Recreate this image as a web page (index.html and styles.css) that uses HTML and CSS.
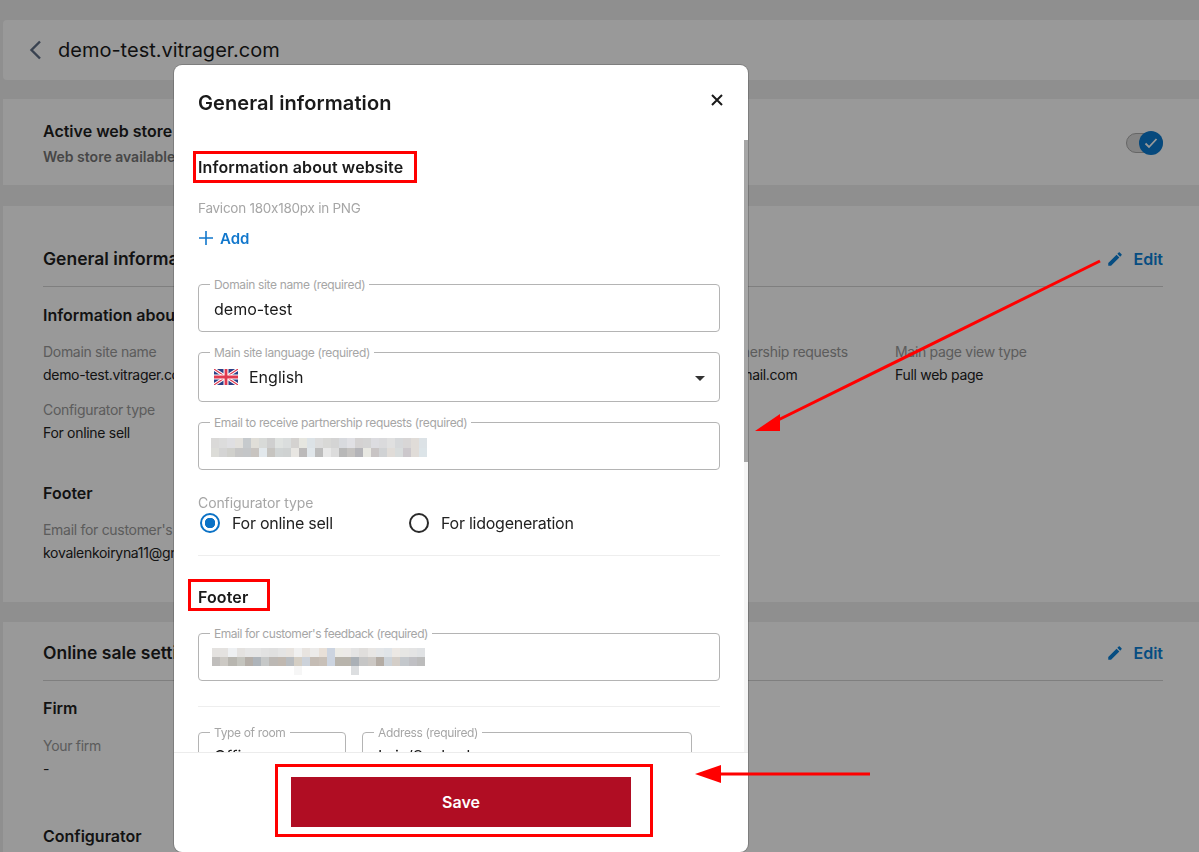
FILE: index.html
```html
<!DOCTYPE html>
<html lang="en">
<head>
<meta charset="utf-8">
<title>demo-test.vitrager.com</title>
<link rel="stylesheet" href="styles.css">
</head>
<body>
<main class="page">
  <header class="card top-card">
    <svg class="back" width="14" height="20" viewBox="0 0 14 20"><path d="M12 1.5 3.5 10l8.5 8.5" fill="none" stroke="#5f6e85" stroke-width="2.4"/></svg>
    <h1 class="site">demo-test.vitrager.com</h1>
  </header>
  <section class="card active-card">
    <div>
      <h2 class="h-sm">Active web store</h2>
      <p class="sub">Web store available to customers</p>
    </div>
    <div class="toggle">
      <span class="knob"><svg width="14" height="12" viewBox="0 0 14 12"><path d="M1.5 6.5 5 10l7.5-8" fill="none" stroke="#fff" stroke-width="1.8"/></svg></span>
    </div>
  </section>
  <section class="card info-card">
    <div class="card-head">
      <h2 class="h-md">General information</h2>
      <a class="edit"><svg width="18" height="18" viewBox="0 0 24 24"><path fill="#0a80d8" d="M3 17.25V21h3.75L17.81 9.94l-3.75-3.75L3 17.25zM20.71 7.04c.39-.39.39-1.02 0-1.41l-2.34-2.34c-.39-.39-1.02-.39-1.41 0l-1.83 1.83 3.75 3.75 1.83-1.83z"/></svg>Edit</a>
    </div>
    <h3 class="h-sm sec">Information about website</h3>
    <div class="grid">
      <div><p class="lbl">Domain site name</p><p class="val">demo-test.vitrager.com</p></div>
      <div><p class="lbl">Main site language</p><p class="val">English</p></div>
      <div><p class="lbl">Email to receive partnership requests</p><p class="val">kovalenkoiryna11@gmail.com</p></div>
      <div><p class="lbl">Main page view type</p><p class="val">Full web page</p></div>
      <div><p class="lbl">Configurator type</p><p class="val">For online sell</p></div>
    </div>
    <h3 class="h-sm sec-far">Footer</h3>
    <div class="grid">
      <div><p class="lbl">Email for customer's feedback</p><p class="val">kovalenkoiryna11@gmail.com</p></div>
    </div>
  </section>
  <section class="card sale-card">
    <div class="card-head">
      <h2 class="h-md">Online sale settings</h2>
      <a class="edit"><svg width="18" height="18" viewBox="0 0 24 24"><path fill="#0a80d8" d="M3 17.25V21h3.75L17.81 9.94l-3.75-3.75L3 17.25zM20.71 7.04c.39-.39.39-1.02 0-1.41l-2.34-2.34c-.39-.39-1.02-.39-1.41 0l-1.83 1.83 3.75 3.75 1.83-1.83z"/></svg>Edit</a>
    </div>
    <h3 class="h-sm sec">Firm</h3>
    <div class="grid">
      <div><p class="lbl">Your firm</p><p class="val">-</p></div>
    </div>
    <h3 class="h-sm sec-conf">Configurator</h3>
  </section>
</main>

<div class="overlay">
  <div class="modal">
    <div class="modal-head">
      <h2 class="modal-title">General information</h2>
      <button class="close" aria-label="Close"><svg width="12" height="12" viewBox="0 0 12 12"><path d="M1 1l10 10M11 1 1 11" stroke="#1a1a1a" stroke-width="2" fill="none"/></svg></button>
    </div>
    <div class="modal-body">
      <h3 class="m-h m-h-first">Information about website</h3>
      <p class="favicon">Favicon 180x180px in PNG</p>
      <a class="add"><svg width="16" height="16" viewBox="0 0 16 16"><path d="M8 1v14M1 8h14" stroke="#1177cc" stroke-width="1.6" fill="none"/></svg>Add</a>

      <div class="field f-first"><span class="legend">Domain site name (required)</span><span class="value">demo-test</span></div>
      <div class="field f-select"><span class="legend">Main site language (required)</span>
        <svg class="flag" width="24" height="16" viewBox="0 0 24 16">
          <rect width="24" height="16" fill="#2b3f86"/>
          <path d="M0 0l24 16M24 0 0 16" stroke="#fff" stroke-width="3.2"/>
          <path d="M0 0l24 16M24 0 0 16" stroke="#e0394f" stroke-width="1.1"/>
          <path d="M12 0v16M0 8h24" stroke="#fff" stroke-width="5"/>
          <path d="M12 0v16M0 8h24" stroke="#e0394f" stroke-width="2.8"/>
        </svg>
        <span class="value">English</span>
        <span class="caret"></span>
      </div>
      <div class="field"><span class="legend">Email to receive partnership requests (required)</span>
        <svg class="mosaic mosaic-a" width="216" height="19" viewBox="0 0 27 2" preserveAspectRatio="none" shape-rendering="crispEdges" aria-hidden="true">
          <rect x="0" y="0" width="1" height="1" fill="#dad9d8"/><rect x="1" y="0" width="1" height="1" fill="#dcdcdc"/><rect x="2" y="0" width="1" height="1" fill="#dfdfe2"/><rect x="3" y="0" width="1" height="1" fill="#e2e0dc"/><rect x="4" y="0" width="1" height="1" fill="#c6cacd"/><rect x="5" y="0" width="1" height="1" fill="#e0ded8"/><rect x="6" y="0" width="1" height="1" fill="#d8dad8"/><rect x="7" y="0" width="1" height="1" fill="#cfcfcf"/><rect x="8" y="0" width="1" height="1" fill="#dfe2e0"/><rect x="9" y="0" width="1" height="1" fill="#dadddd"/><rect x="10" y="0" width="1" height="1" fill="#d4d2d0"/><rect x="11" y="0" width="1" height="1" fill="#e6e6e0"/><rect x="12" y="0" width="1" height="1" fill="#dce2e6"/><rect x="13" y="0" width="1" height="1" fill="#dcdcdc"/><rect x="14" y="0" width="1" height="1" fill="#d8d8d6"/><rect x="15" y="0" width="1" height="1" fill="#d4d4d4"/><rect x="16" y="0" width="1" height="1" fill="#d8dade"/><rect x="17" y="0" width="1" height="1" fill="#e0e0e4"/><rect x="18" y="0" width="1" height="1" fill="#d4d2d2"/><rect x="19" y="0" width="1" height="1" fill="#d4d4d4"/><rect x="20" y="0" width="1" height="1" fill="#dcdce0"/><rect x="21" y="0" width="1" height="1" fill="#dadadc"/><rect x="22" y="0" width="1" height="1" fill="#e0e0e0"/><rect x="23" y="0" width="1" height="1" fill="#d6d8da"/><rect x="24" y="0" width="1" height="1" fill="#d8d6d6"/><rect x="25" y="0" width="1" height="1" fill="#e0dcd8"/><rect x="26" y="0" width="1" height="1" fill="#dce2e6"/>
          <rect x="0" y="1" width="1" height="1" fill="#dcdcd8"/><rect x="1" y="1" width="1" height="1" fill="#d4d4d4"/><rect x="2" y="1" width="1" height="1" fill="#d0d0cc"/><rect x="3" y="1" width="1" height="1" fill="#c6c6c6"/><rect x="4" y="1" width="1" height="1" fill="#c4c6c8"/><rect x="5" y="1" width="1" height="1" fill="#c8c4c0"/><rect x="6" y="1" width="1" height="1" fill="#e2e8ec"/><rect x="7" y="1" width="1" height="1" fill="#c6c4c0"/><rect x="8" y="1" width="1" height="1" fill="#d0d4d4"/><rect x="9" y="1" width="1" height="1" fill="#cfd2d2"/><rect x="10" y="1" width="1" height="1" fill="#e8e6e2"/><rect x="11" y="1" width="1" height="1" fill="#bcbaba"/><rect x="12" y="1" width="1" height="1" fill="#e0e6ea"/><rect x="13" y="1" width="1" height="1" fill="#bcbcbc"/><rect x="14" y="1" width="1" height="1" fill="#e8e8e8"/><rect x="15" y="1" width="1" height="1" fill="#dcdcdc"/><rect x="16" y="1" width="1" height="1" fill="#b8b8b8"/><rect x="17" y="1" width="1" height="1" fill="#c4c2c0"/><rect x="18" y="1" width="1" height="1" fill="#b4b4b8"/><rect x="19" y="1" width="1" height="1" fill="#e8e8e2"/><rect x="20" y="1" width="1" height="1" fill="#c8c4c4"/><rect x="21" y="1" width="1" height="1" fill="#d0d2d4"/><rect x="22" y="1" width="1" height="1" fill="#e0dcd8"/><rect x="23" y="1" width="1" height="1" fill="#d8dcdc"/><rect x="24" y="1" width="1" height="1" fill="#ccc8cc"/><rect x="25" y="1" width="1" height="1" fill="#e0dcd8"/><rect x="26" y="1" width="1" height="1" fill="#dce4e8"/>
        </svg>
      </div>

      <p class="conf-label">Configurator type</p>
      <div class="radios">
        <label class="radio radio-a"><span class="dot dot-on"></span>For online sell</label>
        <label class="radio"><span class="dot"></span>For lidogeneration</label>
      </div>
      <hr class="rule rule-a">

      <h3 class="m-h m-h-footer">Footer</h3>
      <div class="field f-footer"><span class="legend">Email for customer's feedback (required)</span>
        <svg class="mosaic mosaic-b" width="213" height="27" viewBox="0 0 26 3" preserveAspectRatio="none" shape-rendering="crispEdges" aria-hidden="true">
          <rect x="0" y="0" width="1" height="1" fill="#e4e2e0"/><rect x="1" y="0" width="1" height="1" fill="#e4e2e0"/><rect x="2" y="0" width="1" height="1" fill="#eef0f2"/><rect x="3" y="0" width="1" height="1" fill="#e4e2e0"/><rect x="4" y="0" width="1" height="1" fill="#e6e6e6"/><rect x="5" y="0" width="1" height="1" fill="#e6e6e6"/><rect x="6" y="0" width="1" height="1" fill="#e2e2e2"/><rect x="7" y="0" width="1" height="1" fill="#e0e0e0"/><rect x="8" y="0" width="1" height="1" fill="#e4e4e4"/><rect x="9" y="0" width="1" height="1" fill="#e8e4e0"/><rect x="10" y="0" width="1" height="1" fill="#f0f0f0"/><rect x="11" y="0" width="1" height="1" fill="#e8e4e0"/><rect x="12" y="0" width="1" height="1" fill="#ecebea"/><rect x="13" y="0" width="1" height="1" fill="#e8e0d8"/><rect x="14" y="0" width="1" height="1" fill="#ccd4e0"/><rect x="15" y="0" width="1" height="1" fill="#ecebe6"/><rect x="16" y="0" width="1" height="1" fill="#eceae8"/><rect x="17" y="0" width="1" height="1" fill="#e4e4e4"/><rect x="18" y="0" width="1" height="1" fill="#e0dedc"/><rect x="19" y="0" width="1" height="1" fill="#e8e6e4"/><rect x="20" y="0" width="1" height="1" fill="#e4e6e8"/><rect x="21" y="0" width="1" height="1" fill="#e0e4e8"/><rect x="22" y="0" width="1" height="1" fill="#ece8e4"/><rect x="23" y="0" width="1" height="1" fill="#e6e6e4"/><rect x="24" y="0" width="1" height="1" fill="#e4e4e4"/><rect x="25" y="0" width="1" height="1" fill="#e0e2e4"/>
          <rect x="0" y="1" width="1" height="1" fill="#c0bebc"/><rect x="1" y="1" width="1" height="1" fill="#ccc9c4"/><rect x="2" y="1" width="1" height="1" fill="#b8b6b0"/><rect x="3" y="1" width="1" height="1" fill="#c4c4be"/><rect x="4" y="1" width="1" height="1" fill="#b4aea8"/><rect x="5" y="1" width="1" height="1" fill="#aeb4ba"/><rect x="6" y="1" width="1" height="1" fill="#c6c8c8"/><rect x="7" y="1" width="1" height="1" fill="#bcb8b4"/><rect x="8" y="1" width="1" height="1" fill="#c0b8b0"/><rect x="9" y="1" width="1" height="1" fill="#b8bcc0"/><rect x="10" y="1" width="1" height="1" fill="#d4cec4"/><rect x="11" y="1" width="1" height="1" fill="#ccd2da"/><rect x="12" y="1" width="1" height="1" fill="#c4bcb4"/><rect x="13" y="1" width="1" height="1" fill="#c8c0b8"/><rect x="14" y="1" width="1" height="1" fill="#ccd4e0"/><rect x="15" y="1" width="1" height="1" fill="#b8b4ac"/><rect x="16" y="1" width="1" height="1" fill="#b8b4ac"/><rect x="17" y="1" width="1" height="1" fill="#aab0b6"/><rect x="18" y="1" width="1" height="1" fill="#c6c6c6"/><rect x="19" y="1" width="1" height="1" fill="#ccc8c4"/><rect x="20" y="1" width="1" height="1" fill="#b4aca4"/><rect x="21" y="1" width="1" height="1" fill="#ccd2d8"/><rect x="22" y="1" width="1" height="1" fill="#d4cec8"/><rect x="23" y="1" width="1" height="1" fill="#c4c8cc"/><rect x="24" y="1" width="1" height="1" fill="#c0c0c4"/><rect x="25" y="1" width="1" height="1" fill="#bcbcbc"/>
          <rect x="10" y="2" width="1" height="1" fill="#f6f6f6"/><rect x="17" y="2" width="1" height="1" fill="#dcdee0"/>
        </svg>
      </div>
      <hr class="rule rule-b">
      <div class="field-row">
        <div class="field f-room"><span class="legend">Type of room</span><span class="value">Office</span></div>
        <div class="field f-addr"><span class="legend">Address (required)</span><span class="value">Lviv/Svoboda ave</span></div>
      </div>
    </div>
    <div class="modal-foot"><button class="save">Save</button></div>
    <span class="track"><span class="thumb"></span></span>
  </div>
</div>

<span class="mark mark-info"></span>
<span class="mark mark-footer"></span>
<span class="mark mark-save"></span>
<svg class="arrows" width="1199" height="852" viewBox="0 0 1199 852" aria-hidden="true">
  <path d="M1100 261 772 423" stroke="#f00" stroke-width="3" fill="none"/>
  <path d="M755 431 780 414 780 431z" fill="#f00"/>
  <path d="M870 774H716" stroke="#f00" stroke-width="3" fill="none"/>
  <path d="M695 774 721 765V783z" fill="#f00"/>
</svg>
</body>
</html>
```
FILE: styles.css
```css
* { box-sizing: border-box; }
html, body { margin: 0; height: 100%; overflow: hidden; }
body { background: #efefef; font-family: Inter, "Noto Sans", sans-serif; font-feature-settings: "calt" 0; color: #2a2a2a; }
h1, h2, h3, p { margin: 0; }

.page { padding: 20px 0 0 3px; }
.card { background: #fff; padding-left: 40px; padding-right: 36px; }

.top-card { height: 60px; padding-left: 25px; display: flex; align-items: center; gap: 16px; border-radius: 4px 0 0 4px; }
.site { font-size: 20px; font-weight: 400; line-height: 28px; color: #1c1c1c; }

.active-card { margin-top: 19px; height: 86px; padding-top: 20px; display: flex; justify-content: space-between; }
.h-sm { font-size: 16px; line-height: 24px; font-weight: 600; color: #1f1f1f; }
.sub { margin-top: 4px; font-size: 14px; line-height: 20px; font-weight: 600; color: #777; }
.toggle { position: relative; width: 37px; height: 20px; margin-top: 14px; border: 1px solid #aaa; background: #ddd; border-radius: 10px; }
.knob { position: absolute; right: -1px; top: -3px; width: 24px; height: 24px; border-radius: 50%; background: #0a7ad0; display: flex; align-items: center; justify-content: center; }

.info-card { margin-top: 21px; height: 396px; padding-top: 41px; }
.sale-card { margin-top: 20px; height: 240px; padding-top: 19px; }
.card-head { display: flex; justify-content: space-between; align-items: center; height: 40px; padding: 1px 0 16px; border-bottom: 1px solid #d4d4d4; }
.h-md { font-size: 17.5px; line-height: 22px; font-weight: 600; color: #1f1f1f; }
.edit { display: flex; align-items: center; gap: 9px; font-size: 16px; line-height: 22px; font-weight: 600; color: #0a80d8; }
.sec { margin-top: 15px; }
.info-card .sec { margin-top: 16px; }
.sec-far { margin-top: 38px; }
.sec-conf { margin-top: 45px; }
.grid { margin-top: 15px; display: grid; grid-template-columns: 276px 294px 282px 1fr; row-gap: 15px; }
.sale-card .grid { margin-top: 16px; }
.lbl { font-size: 14px; line-height: 20px; letter-spacing: -.3px; color: #999; }
.val { margin-top: 3px; font-size: 14px; line-height: 20px; letter-spacing: -.3px; color: #222; }

.overlay { position: fixed; inset: 0; background: rgba(0, 0, 0, .4); padding: 65px 0 0 174px; }
.modal { position: relative; width: 574px; height: 787px; background: #fff; border-radius: 8px; display: flex; flex-direction: column; overflow: hidden; box-shadow: 0 0 0 1px rgba(0, 0, 0, .18); }
.modal-head { flex: none; padding: 24px 24px 0; display: flex; justify-content: space-between; }
.modal-title { font-size: 20px; line-height: 28px; font-weight: 600; letter-spacing: .1px; color: #1a1a1a; }
.close { border: 0; padding: 0; margin: 5px 1px 0 0; background: none; width: 12px; height: 12px; display: block; line-height: 0; }
.modal-body { flex: 1; min-height: 0; overflow: hidden; padding: 0 28px 0 24px; }
.modal-foot { flex: none; height: 100px; border-top: 1px solid #ececec; padding-top: 24px; display: flex; justify-content: center; }
.save { width: 340px; height: 50px; border: 0; background: #b00d23; color: #fff; font: 600 16px Inter, sans-serif; }
.track { position: absolute; left: 570px; top: 75px; bottom: 100px; width: 4px; background: #f5f5f5; }
.thumb { display: block; height: 322px; background: #a6a6a6; }

.m-h { font-size: 16px; line-height: 24px; font-weight: 600; letter-spacing: .12px; color: #1a1a1a; }
.m-h-first { margin-top: 38px; }
.favicon { margin-top: 19px; font-size: 13.5px; line-height: 20px; letter-spacing: -.25px; color: #a6a6a6; }
.add { margin-top: 8px; display: flex; align-items: center; gap: 6px; height: 24px; font-size: 15px; font-weight: 600; color: #1177cc; }

.field { position: relative; height: 48px; margin-top: 20px; padding-left: 15px; display: flex; align-items: center; border: 1px solid #b4b4b4; border-radius: 4px; }
.f-first { margin-top: 34px; }
.f-first .value { margin-top: 2px; }
.f-select { height: 50px; }
.f-footer { margin-top: 24px; }
.legend { position: absolute; left: 11px; top: -8px; padding: 0 4px; background: #fff; font-size: 12px; line-height: 15px; letter-spacing: -.35px; color: #a6a6a6; white-space: nowrap; }
.f-footer .legend { letter-spacing: -.45px; }
.value { font-size: 16px; color: #1a1a1a; white-space: nowrap; }
.flag { margin-right: 11px; flex: none; }
.caret { position: absolute; right: 14px; top: 23px; border: 5px solid transparent; border-top-color: #333; border-bottom: 0; }
.mosaic { display: block; align-self: flex-start; }
.mosaic-a { margin: 15px 0 0 -3px; }
.mosaic-b { margin: 14px 0 0 -2px; }

.conf-label { margin-top: 23px; font-size: 14px; line-height: 20px; letter-spacing: -.1px; color: #a6a6a6; }
.radios { display: flex; height: 20px; font-size: 16px; letter-spacing: -.25px; color: #222; }
.radio { display: flex; align-items: center; gap: 12px; padding-left: 2px; }
.radio-a { width: 209px; }
.dot { width: 20px; height: 20px; border: 2px solid #2a2a2a; border-radius: 50%; flex: none; }
.dot-on { border-color: #0b72c6; background: radial-gradient(circle, #0b72c6 0 5px, #fff 5.5px); }

.rule { margin: 0; border: 0; height: 1px; background: #eee; }
.rule-a { margin-top: 22px; }
.rule-b { margin-top: 25px; }
.m-h-footer { margin-top: 29px; }
.field-row { margin-top: 25px; display: flex; gap: 16px; }
.field-row .field { margin-top: 0; flex: none; }
.f-room { width: 148px; }
.f-addr { width: 330px; }

.mark { position: fixed; border: 3px solid #f00; }
.mark-info { left: 193px; top: 151px; width: 224px; height: 32px; }
.mark-footer { left: 188px; top: 579px; width: 82px; height: 32px; }
.mark-save { left: 275px; top: 764px; width: 378px; height: 73px; }
.arrows { position: fixed; left: 0; top: 0; }
```
